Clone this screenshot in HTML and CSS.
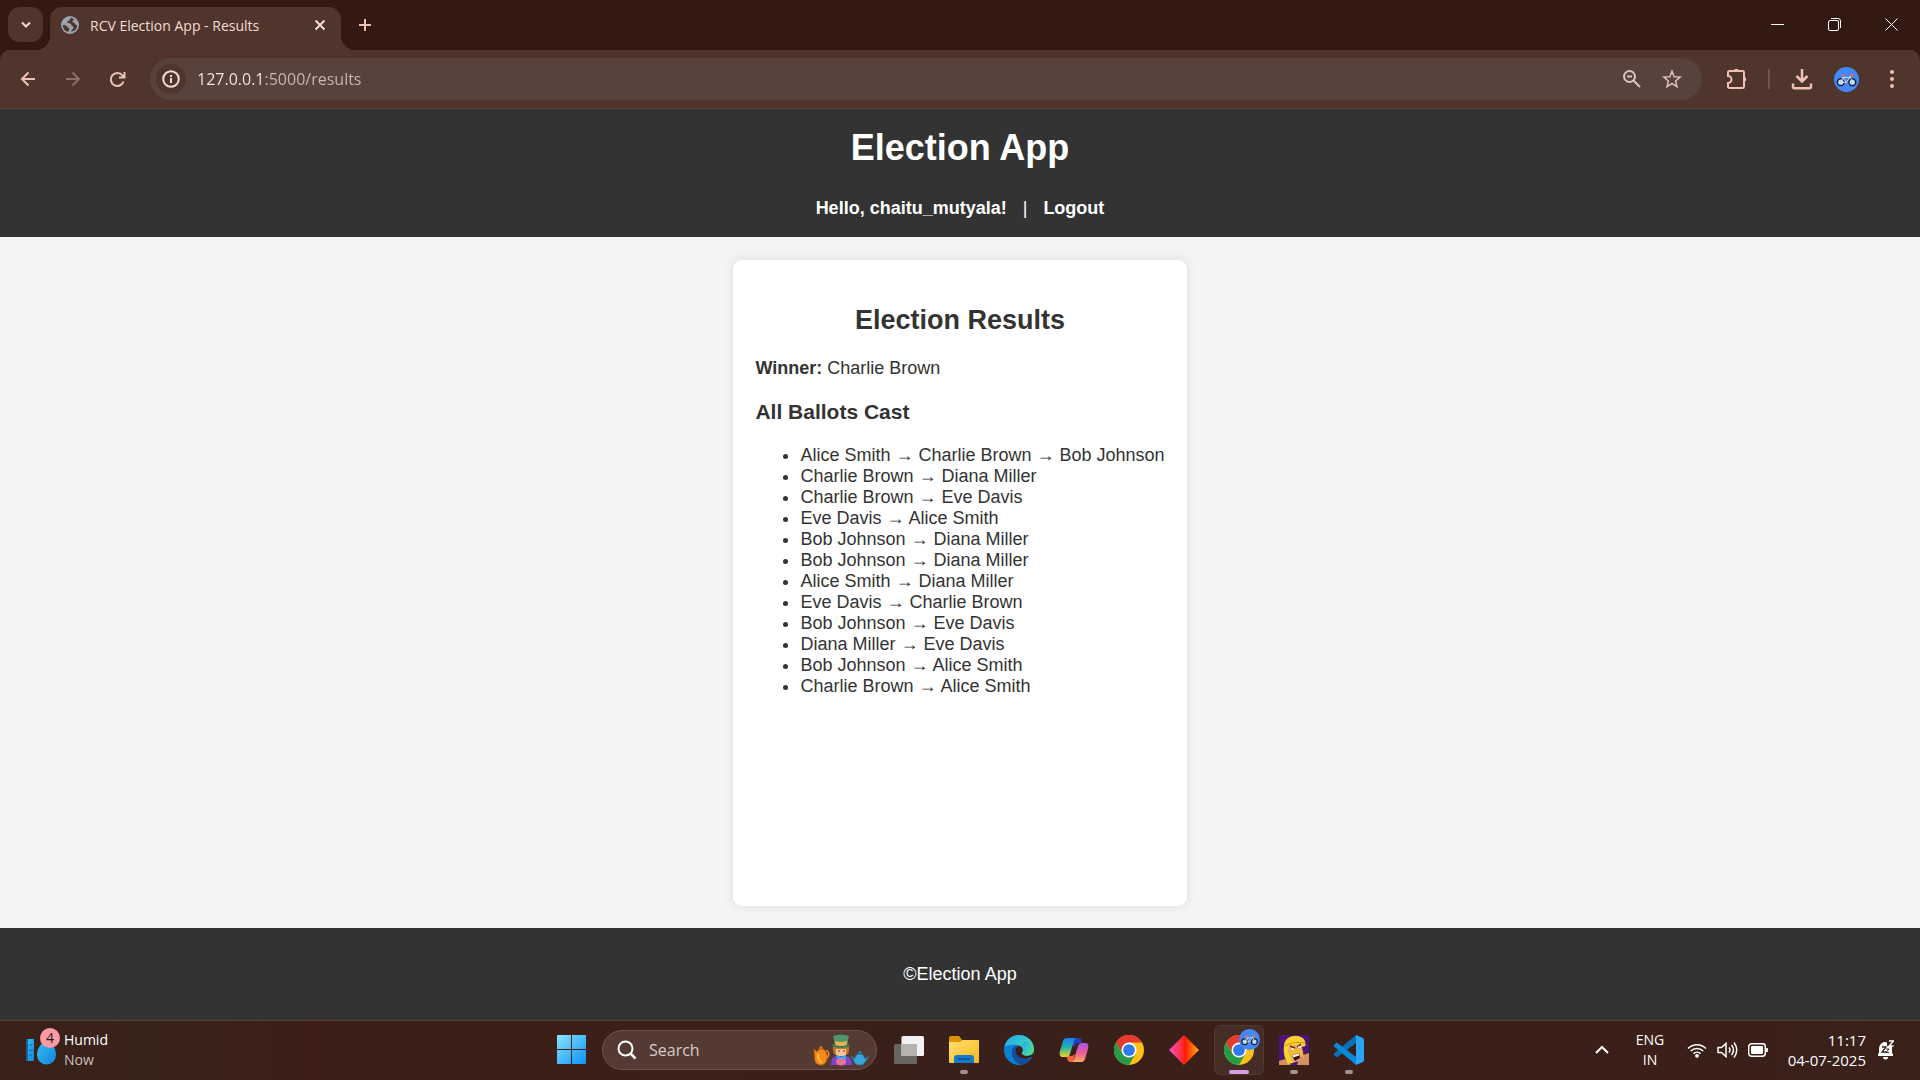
FILE: index.html
```html
<!DOCTYPE html>
<html lang="en">
<head>
<meta charset="utf-8">
<meta name="viewport" content="width=device-width, initial-scale=1">
<title>RCV Election App - Results</title>
<link rel="stylesheet" href="styles.css">
</head>
<body>
<svg width="0" height="0" class="defs" aria-hidden="true">
  <defs>
    <linearGradient id="win" x1="0" y1="0" x2="1" y2="1"><stop offset="0" stop-color="#8be3ff"/><stop offset="1" stop-color="#0a93f7"/></linearGradient>
    <linearGradient id="drop" x1="0" y1="0" x2="1" y2="1"><stop offset="0" stop-color="#35c3f5"/><stop offset="1" stop-color="#1683da"/></linearGradient>
    <linearGradient id="fold" x1="0" y1="0" x2="1" y2="1"><stop offset="0" stop-color="#ffdf74"/><stop offset="1" stop-color="#f9b91c"/></linearGradient>
    <linearGradient id="edgeTop" x1="0" y1="0" x2="1" y2="1"><stop offset="0" stop-color="#22a5e4"/><stop offset=".5" stop-color="#37c6cf"/><stop offset="1" stop-color="#66e94e"/></linearGradient>
    <linearGradient id="copA" x1="0" y1="0" x2="0" y2="1"><stop offset="0" stop-color="#1b7ef0"/><stop offset=".5" stop-color="#25b6a8"/><stop offset="1" stop-color="#f2d325"/></linearGradient>
    <linearGradient id="copB" x1="0" y1="0" x2="0" y2="1"><stop offset="0" stop-color="#a556e8"/><stop offset=".5" stop-color="#ec5a9c"/><stop offset="1" stop-color="#fcae5c"/></linearGradient>
    <linearGradient id="gem" x1="0" y1="0" x2="1" y2="0"><stop offset="0" stop-color="#ff4fd0"/><stop offset=".46" stop-color="#fb2a2d"/><stop offset=".54" stop-color="#ff1a00"/><stop offset="1" stop-color="#ffae10"/></linearGradient>
    <symbol id="bike" viewBox="0 0 25 25">
      <circle cx="12.5" cy="12.5" r="12.5" fill="#4488f7"/>
      <g fill="#b9dcff" stroke="#1c2434" stroke-width="1.5"><circle cx="6.8" cy="15.2" r="3.4"/><circle cx="18.3" cy="15.2" r="3.4"/></g>
      <path d="M6.8 15.2L9 10.5h7l-4 5zM9 10.5l3 5M16 9l2.3 6.2" fill="none" stroke="#cdd6e4" stroke-width="1"/>
      <path d="M7 8.4h4M15.5 8h3.2l-1 1.6" fill="none" stroke="#ee6a4c" stroke-width="1.5"/>
    </symbol>
    <symbol id="chrome" viewBox="0 0 48 48">
      <circle cx="24" cy="24" r="24" fill="#fbc116"/>
      <path d="M24 12h20.8A24 24 0 0 0 3.2 12l10.4 18z" fill="#e33b2e"/>
      <path d="M3.2 12A24 24 0 0 0 24 48L34.4 30 24 34 13.6 30z" fill="#269a46"/>
      <circle cx="24" cy="24" r="12" fill="#fff"/><circle cx="24" cy="24" r="9.4" fill="#2f7bee"/>
    </symbol>
  </defs>
</svg>
<div class="desktop">
  <div class="browser">
    <div class="tabstrip">
      <button class="tab-search" aria-label="Search tabs"><svg width="12" height="8" viewBox="0 0 12 8"><path d="M2 1.5L6 5.5l4-4" class="line-2"/></svg></button>
      <div class="tab">
        <svg width="18" height="18" viewBox="0 0 18 18"><circle cx="9" cy="9" r="9" fill="#9aa4ad"/><path d="M10.5 1.8C8 3 9.5 4.5 7 5c-1 .3-1 2 .5 2.200 2-.2 2.800.8 3 2 .5 1.200 2 .8 2 2.300 0 1.800-2 2-2.500 4.300A7.200 7.200 0 0 0 16.200 9c-1.200 0-2-.5-2.300-1.500-.4-1.200-2.400-.6-2.400-2 0-1.300 1-1.500 1.500-2.500zM1.800 9c1.500.2 3.700-.3 4.200 1.500.3 1.500 2.500.8 2.300 2.500-.2 1.200-.8 1.500-1.300 3A7.200 7.200 0 0 1 1.800 9z" fill="#50352c"/></svg>
        <span class="tab-title">RCV Election App - Results</span>
        <button class="plain" aria-label="Close tab"><svg width="12" height="12" viewBox="0 0 12 12"><path d="M1.500 1.500l9 9m0-9l-9 9" class="line-2"/></svg></button>
      </div>
      <button class="plain new-tab" aria-label="New tab"><svg width="14" height="14" viewBox="0 0 14 14"><path d="M7 1v12M1 7h12" class="line-2"/></svg></button>
      <div class="window-controls">
        <button class="plain" aria-label="Minimize"><svg width="13" height="13" viewBox="0 0 13 13"><path d="M0 6.500h13" class="line-w"/></svg></button>
        <button class="plain" aria-label="Restore"><svg width="13" height="13" viewBox="0 0 13 13"><rect x=".5" y="2.500" width="10" height="10" rx="1.500" class="line-w"/><path d="M3 .5h7a2.500 2.500 0 0 1 2.500 2.500v7" class="line-w"/></svg></button>
        <button class="plain" aria-label="Close"><svg width="13" height="13" viewBox="0 0 13 13"><path d="M.5.5l12 12m0-12l-12 12" class="line-w"/></svg></button>
      </div>
    </div>
    <div class="toolbar">
      <button class="plain tool" aria-label="Back"><svg width="16" height="16" viewBox="0 0 16 16"><path d="M15 8H2m6.500-6.500L2 8l6.500 6.500" class="line-2"/></svg></button>
      <button class="plain tool dim" aria-label="Forward"><svg width="16" height="16" viewBox="0 0 16 16"><path d="M1 8h13M7.500 1.500L14 8l-6.500 6.500" class="line-2"/></svg></button>
      <button class="plain tool" aria-label="Reload"><svg width="17" height="17" viewBox="0 0 17 17"><path d="M14.500 10.500A6.500 6.500 0 1 1 13.500 4.500L15 6M15.500 1v5.500H10" class="line-2"/></svg></button>
      <div class="omnibox">
        <button class="plain site-info" aria-label="View site information"><svg width="18" height="18" viewBox="0 0 18 18"><circle cx="9" cy="9" r="7.800" class="line-2"/><path d="M9 8v5M9 5v2" class="line-2"/></svg></button>
        <input class="url" type="text" aria-label="Address" value="127.0.0.1:5000/results">
        <button class="plain" aria-label="Zoom"><svg width="18" height="18" viewBox="0 0 18 18"><circle cx="6.500" cy="6.500" r="5.500" class="line-2"/><path d="M10.500 10.500l6.500 6.500M4 6.500h5" class="line-2"/></svg></button>
        <button class="plain" aria-label="Bookmark"><svg width="20" height="20" viewBox="0 0 20 20"><path d="M10 2.200l2.200 5.500 5.900.4-4.500 3.800 1.400 5.700-5-3.100-5 3.100 1.400-5.700L1.900 8.100l5.900-.4z" class="line-s"/></svg></button>
      </div>
      <button class="plain tool" aria-label="Extensions"><svg width="22" height="22" viewBox="0 0 22 22"><path d="M3.500 3h13.200a1.300 1.300 0 0 1 1.300 1.300v14.400a1.300 1.300 0 0 1-1.300 1.300H3.300A1.300 1.300 0 0 1 2 18.700V15a3.500 3.500 0 0 0 0-7V4.300A1.300 1.300 0 0 1 3.500 3z" class="line-2"/><path d="M7.500 3a2.800 2.800 0 0 1 5.500 0zM18 8.500a2.800 2.800 0 0 1 0 5.500z" fill="currentColor"/></svg></button>
      <span class="divider"></span>
      <button class="plain tool" aria-label="Downloads"><svg width="22" height="22" viewBox="0 0 22 22"><path d="M11 1v12M5.500 8l5.500 5.500L16.500 8M2 15.500V19a1.200 1.200 0 0 0 1.200 1.200h15.600A1.200 1.200 0 0 0 20 19v-3.500" class="line-b"/></svg></button>
      <button class="plain tool" aria-label="Profile"><svg width="25" height="25"><use href="#bike"/></svg></button>
      <button class="plain tool" aria-label="Menu"><svg width="4" height="18" viewBox="0 0 4 18" fill="currentColor"><circle cx="2" cy="2" r="2"/><circle cx="2" cy="9" r="2"/><circle cx="2" cy="16" r="2"/></svg></button>
    </div>
  </div>

  <div class="page">
    <header class="site-header">
      <h1>Election App</h1>
      <nav><strong>Hello, chaitu_mutyala!</strong><span>|</span><a href="#logout">Logout</a></nav>
    </header>
    <main>
      <section class="card">
        <h2>Election Results</h2>
        <p><strong>Winner:</strong> Charlie Brown</p>
        <h3>All Ballots Cast</h3>
        <ul>
          <li>Alice Smith <span class="arrow">→</span> Charlie Brown <span class="arrow">→</span> Bob Johnson</li>
          <li>Charlie Brown <span class="arrow">→</span> Diana Miller</li>
          <li>Charlie Brown <span class="arrow">→</span> Eve Davis</li>
          <li>Eve Davis <span class="arrow">→</span> Alice Smith</li>
          <li>Bob Johnson <span class="arrow">→</span> Diana Miller</li>
          <li>Bob Johnson <span class="arrow">→</span> Diana Miller</li>
          <li>Alice Smith <span class="arrow">→</span> Diana Miller</li>
          <li>Eve Davis <span class="arrow">→</span> Charlie Brown</li>
          <li>Bob Johnson <span class="arrow">→</span> Eve Davis</li>
          <li>Diana Miller <span class="arrow">→</span> Eve Davis</li>
          <li>Bob Johnson <span class="arrow">→</span> Alice Smith</li>
          <li>Charlie Brown <span class="arrow">→</span> Alice Smith</li>
        </ul>
      </section>
    </main>
    <footer class="site-footer"><p>©Election App</p></footer>
  </div>

  <div class="taskbar">
    <button class="plain weather">
      <span class="weather-icon">
        <svg width="32" height="34" viewBox="0 0 32 34"><rect x="1" y="6" width="7" height="22" fill="url(#drop)"/><path d="M0 6h2v22H0z" fill="#14609f"/><path d="M3 12h3M3 17h4M3 22h3" stroke="#14609f"/><path d="M21 4c5 6 9 11 9 18a9.500 9.500 0 0 1-19 0c0-7 5-12 10-18z" fill="url(#drop)"/></svg>
        <span class="badge">4</span>
      </span>
      <span class="stack"><span>Humid</span><span class="muted">Now</span></span>
    </button>
    <div class="dock">
      <button class="plain app" aria-label="Start"><svg width="29" height="29" viewBox="0 0 29 29" fill="url(#win)"><path d="M1 0h13v14H0V1a1 1 0 0 1 1-1zM15 0h13a1 1 0 0 1 1 1v13H15zM0 15h14v14H1a1 1 0 0 1-1-1zM15 15h14v13a1 1 0 0 1-1 1H15z"/></svg></button>
      <label class="search">
        <svg width="20" height="20" viewBox="0 0 20 20"><circle cx="8.500" cy="8.500" r="7" class="line-2"/><path d="M13.500 13.500l5 5" class="line-b"/></svg>
        <input type="text" placeholder="Search" aria-label="Search">
        <svg width="56" height="32" viewBox="0 0 56 32">
          <path d="M1 15l3 3c1-2 2-3 4-3 4 0 6 3 6 8 0 4-2 8-6 8s-7-3-6-8zM7 13l1-1 2 3H6z" fill="#f78a16" stroke="#c9650c" stroke-width=".8"/><path d="M13 17c3-1 4 4 1 7" fill="none" stroke="#f78a16" stroke-width="1.500"/><path d="M5 20c0 5 1 7 4 9" stroke="#ffc04a" stroke-width="2" fill="none"/>
          <circle cx="28" cy="16" r="7" fill="#f6c394"/><path d="M20 12c0 7 1 9 3 8l1-5h8l1 5c3 1 3-3 3-8z" fill="#c8752b"/><path d="M23 15h10v4q-5 5-10 0z" fill="#f6c394"/>
          <ellipse cx="28" cy="11.500" rx="9" ry="2.500" fill="#3e7a54"/><path d="M20 2q8-3 16 0l-2 9q-6 2-12 0z" fill="#53946a"/><path d="M22 7q6 2 12 0l-.5 4q-5 2-11 0z" fill="#e9b647"/>
          <path d="M18 31c0-7 3-9 6-9h8c4 0 7 3 7 9z" fill="#8244c8"/><path d="M24 21l4 2 5-2v5l-5-1-4 1z" fill="#28aee5"/><ellipse cx="28" cy="28" rx="5" ry="3.500" fill="#f56e94"/><path d="M25 17h2m3 0h2" stroke="#5a3220"/>
          <path d="M38 22l4 3c0-4 2-5 5-5s4 2 5 5l4-3-4 6c-1 2-2 3-5 3-4 0-6-2-6-4zM45 19l2-2 2 2z" fill="#36a6d8" stroke="#1978a7" stroke-width=".6"/>
        </svg>
      </label>
      <button class="plain app" aria-label="Task view"><svg width="30" height="28" viewBox="0 0 30 28"><rect y="8" width="23" height="20" rx="1.500" fill="#686563"/><rect x="7.500" width="22.500" height="20" rx="1.500" fill="#f2f2f2"/><path d="M7.500 8H23v12H7.500z" fill="#b5b3b2"/></svg></button>
      <button class="plain app running" aria-label="File Explorer"><svg width="30" height="28" viewBox="0 0 30 28"><path d="M0 2a2 2 0 0 1 2-2h8l3 4h14a3 3 0 0 1 3 3v6H0z" fill="#dc9404"/><path d="M0 6h11l3-2h16v22a1 1 0 0 1-1 1H1a1 1 0 0 1-1-1z" fill="url(#fold)"/><path d="M5 27v-5a3 3 0 0 1 3-3h14a3 3 0 0 1 3 3v5z" fill="#1479c9"/><path d="M9 23h12" stroke="#0b4f91" stroke-width="1.500"/></svg></button>
      <button class="plain app" aria-label="Edge"><svg width="30" height="30" viewBox="0 0 30 30"><circle cx="15" cy="15" r="15" fill="#0d7ed6"/><path d="M.3 12A15 15 0 0 1 30 14c0 4-3 6.500-7 6.500-3 0-5-1-5-2.500 0-1 1-1.500 1-3 0-3-4-5.500-8.500-5.500C6 9.500 2 10.500.3 12z" fill="url(#edgeTop)"/><path d="M12 11c-3 1-5 5-4 9 1 5 5 9 10 9.700 4-.5 7.500-3.500 9.500-7.200-3 2-8 2-11 0-4-2.500-5.500-7.500-2-11z" fill="#124f9a"/><path d="M14 11c-4 3-3 9 2 11.500 4 2 8 1.500 11.500-.5.600-.3 1.200 0 1 .5l1.500.5V18l-2 1.500c-4 2.500-10 1.500-10-1.500 0-1 1-1.500 1-3 0-2-2-4.500-5-4z" fill="#3b1e17"/><path d="M28.500 18c-1.500 2-4 2.500-6 2.500-2.500 0-4.500-1-4.500-2.500 0-1 1-1.500 1-3 0-2-1-3-2-4l4-5 9 7c0 2-.5 3.500-1.500 5z" fill="url(#edgeTop)"/></svg></button>
      <button class="plain app" aria-label="Copilot"><svg width="30" height="26" viewBox="0 0 30 26"><path d="M12 1h8c2 0 2.500 2 3 5h-4c-2 0-3 2-4 5z" fill="#2441bd"/><path d="M8 19h5l3-2-2 8h-2c-3 0-4-2-4-6z" fill="#f2603c"/><path d="M8 1h10c-2 0-3 2-4 6l-3 10c-.5 2-2 3-4 3H4c-3 0-4-2-3-6L4 4c.7-2 2-3 4-3z" fill="url(#copA)"/><path d="M22 25H12c2 0 3-2 4-6l3-10c.5-2 2-3 4-3h3c3 0 4 2 3 6l-3 10c-.7 2-2 3-4 3z" fill="url(#copB)"/></svg></button>
      <button class="plain app" aria-label="Chrome"><svg width="30" height="30"><use href="#chrome"/></svg></button>
      <button class="plain app" aria-label="Gem"><svg width="30" height="30" viewBox="0 0 30 30"><path d="M15 0l15 15-15 15L0 15z" fill="url(#gem)"/></svg></button>
      <button class="plain app active" aria-label="Chrome profile"><svg width="30" height="30"><use href="#chrome"/></svg><svg class="profile-badge" width="21" height="21"><use href="#bike"/></svg></button>
      <button class="plain app running" aria-label="Game"><svg width="30" height="30" viewBox="0 0 30 30"><path d="M0 0h30v30H0z" fill="#4a1577"/><path d="M21 21l9-3v12H18zM0 26l6-2 6 6H0z" fill="#d5905f"/><path d="M8 9l14-1 2 9-4 9-7 2-5-9z" fill="#e9a878"/><path d="M5 11C5 4 12 0 18 1c6 .5 9 4 8.500 10l-3.500 1-2-3-8 2-3 1-1 4 2 5 3 7-5 1c-3-5-5-11-4-18z" fill="#fbd12e"/><path d="M6 11q8-5 20-3" stroke="#d79312" fill="none"/><path d="M10 16q6-1 7-2 5 0 7 3l1 7-2-3-3-3-6 1-3 5z" fill="#f2bd1f"/><path d="M13 21l7-3 1 5-5 3z" fill="#3c1111"/><path d="M13.500 20.500l6.500-2v2l-6 2z" fill="#fff"/><path d="M11 11l5 2M18 12l4-3" stroke="#6e2d12" stroke-width="1.500"/><path d="M12 14h3m4-2h3" stroke="#fff" stroke-width="1.500"/></svg></button>
      <button class="plain app running" aria-label="Visual Studio Code"><svg width="30" height="30" viewBox="0 0 30 30"><path d="M22 0L0 18.500a1 1 0 0 0 0 1.500l2 2a1 1 0 0 0 1.500 0L22 8z" fill="#0a72b8"/><path d="M22 30L0 11.500A1 1 0 0 1 0 10l2-2a1 1 0 0 1 1.500 0L22 22z" fill="#0a89d5"/><path d="M22 0l7 3q1 .5 1 1.500v21q0 1-1 1.500l-7 3z" fill="#2aa5f2"/></svg></button>
    </div>
    <div class="tray">
      <button class="plain" aria-label="Show hidden icons"><svg width="14" height="9" viewBox="0 0 14 9"><path d="M1 8l6-6 6 6" class="line-2"/></svg></button>
      <button class="plain stack lang"><span>ENG</span><span>IN</span></button>
      <button class="plain quick" aria-label="Network, volume and battery">
        <svg width="20" height="16" viewBox="0 0 20 16"><path d="M1 6.500a12.700 12.700 0 0 1 18 0M3.800 9a8.800 8.800 0 0 1 12.400 0M6.500 11.600a5 5 0 0 1 7 0" class="line-s"/><circle cx="10" cy="13.800" r="1.900" fill="#fff"/></svg>
        <svg width="21" height="18" viewBox="0 0 21 18"><path d="M1 6.500h3.500L9 2.500v13l-4.500-4H1zM12 6.500q2 2.500 0 5M14.500 4q4 5 0 10M17 1.500q5.500 7.500 0 15" class="line-s"/></svg>
        <svg width="20" height="14" viewBox="0 0 20 14"><rect x=".7" y=".7" width="16.600" height="12.600" rx="3" class="line-s"/><rect x="3" y="3" width="12" height="8" rx="1" fill="#fff"/><path d="M18 5h1a1 1 0 0 1 1 1v2a1 1 0 0 1-1 1h-1z" fill="#fff"/></svg>
      </button>
      <button class="plain stack clock"><span>11:17</span><span>04-07-2025</span></button>
      <button class="plain" aria-label="Notifications"><svg width="17" height="20" viewBox="0 0 17 20"><path d="M1 16v-1.500l1-2V8a6 6 0 0 1 8-5.500V6h5v6.500l1 2V16zM6 17h5a2.500 2.500 0 0 1-5 0z" fill="#fff"/><path d="M5 7h4l-4 5h4" fill="none" stroke="#39201a" stroke-width="1.300"/><path d="M9 9h3l-3 3.500h3" fill="none" stroke="#39201a" stroke-width="1"/><path d="M12 1h4.500L12 6h4.500" fill="none" stroke="#fff" stroke-width="1.300"/></svg></button>
    </div>
  </div>
</div>
</body>
</html>
```
FILE: styles.css
```css
* { box-sizing: border-box; }

body {
  margin: 0;
  font-family: "Liberation Sans", Arial, sans-serif;
  font-size: 18px;
  line-height: 21px;
  color: #333;
}

svg { display: block; flex: none; }
.defs { position: absolute; }

.desktop {
  display: flex;
  flex-direction: column;
  min-height: 100vh;
}

.plain {
  display: flex;
  align-items: center;
  justify-content: center;
  padding: 0;
  border: 0;
  background: none;
  color: inherit;
  font: inherit;
}

.line-w, .line-s, .line-2, .line-b { fill: none; stroke: currentColor; }
.line-w { stroke-width: 1; }
.line-s { stroke-width: 1.5; }
.line-2 { stroke-width: 2; }
.line-b { stroke-width: 2.5; }

/* Browser window */
.browser {
  background: #331912;
  color: #f3dcd5;
  font-family: "Open Sans", "Noto Sans", sans-serif;
}

.tabstrip {
  display: flex;
  height: 50px;
  padding: 7px 0 0 8px;
}

.tab-search {
  display: flex;
  align-items: center;
  justify-content: center;
  width: 35px;
  height: 35px;
  margin-right: 7px;
  padding: 0;
  border: 0;
  border-radius: 12px;
  background: #50352c;
  color: inherit;
}

.tab {
  position: relative;
  display: flex;
  align-items: center;
  gap: 11px;
  width: 291px;
  padding: 0 15px 7px 11px;
  border-radius: 12px 12px 0 0;
  background: #50352c;
  font-size: 14px;
}

.tab::before, .tab::after {
  content: "";
  position: absolute;
  bottom: 0;
  width: 14px;
  height: 14px;
}
.tab::before { right: 100%; background: radial-gradient(circle at 0 0, transparent 14px, #50352c 14px); }
.tab::after { left: 100%; background: radial-gradient(circle at 100% 0, transparent 14px, #50352c 14px); }

.tab-title { flex: 1; white-space: nowrap; }

.new-tab { width: 48px; height: 36px; color: #efc0b4; }

.window-controls {
  display: flex;
  height: 34px;
  margin-left: auto;
  color: #fff;
}
.window-controls .plain { width: 57px; }

.toolbar {
  display: flex;
  align-items: center;
  height: 59px;
  padding: 0 6px 0 5px;
  border-bottom: 1px solid #5d473f;
  border-radius: 10px 10px 0 0;
  background: #50352c;
  color: #efc0b4;
}

.tool { width: 45px; height: 40px; }
.dim { color: #8f6e65; }

.omnibox {
  display: flex;
  flex: 1;
  align-items: center;
  height: 42px;
  margin: 0 12px 0 10px;
  padding: 0 20px 0 6px;
  gap: 21px;
  border-radius: 21px;
  background: #58423c;
  color: #dcc3bb;
}

.site-info {
  width: 30px;
  height: 30px;
  margin-right: -10px;
  border-radius: 50%;
  background: #50352c;
  color: #f3dcd5;
}

.url {
  flex: 1;
  min-width: 0;
  padding: 0;
  border: 0;
  background: linear-gradient(to right, #fbe9e3 68px, #d0b8b0 68px) text;
  color: transparent;
  font: 16px/24px "Open Sans", "Noto Sans", sans-serif;
}

.divider { width: 2px; height: 20px; margin: 0 9px; background: #76534a; }

/* Web page */
.page {
  display: flex;
  flex: 1;
  flex-direction: column;
  background: #f4f4f4;
}

.site-header {
  padding: 18px;
  background: #333;
  color: #fff;
  text-align: center;
}
.site-header h1 { margin: 0 0 30px; font-size: 36px; line-height: 41px; }
.site-header nav { display: flex; justify-content: center; gap: 16px; }
.site-header a { color: #fff; font-weight: bold; text-decoration: none; }

main {
  display: flex;
  flex: 1;
  justify-content: center;
  padding: 23px 22px 22px;
}

.card {
  max-width: 900px;
  padding: 23px 22px;
  border-radius: 9px;
  background: #fff;
  box-shadow: 0 0 11px rgba(0, 0, 0, 0.1);
}
.card h2 { margin: 22px 0; font-size: 27px; line-height: 31px; text-align: center; }
.card p { margin: 0; }
.card h3 { margin: 21px 0; font-size: 21px; line-height: 24px; }
.card ul { margin: 0; padding-left: 45px; }
.arrow { font-family: "Liberation Serif", "Times New Roman", serif; line-height: 1; }

.site-footer {
  padding: 18px 17px 17px;
  background: #333;
  color: #fff;
  text-align: center;
}
.site-footer p { margin: 18px 0; }

/* Taskbar */
.taskbar {
  display: grid;
  grid-template-columns: 1fr auto 1fr;
  align-items: center;
  height: 60px;
  padding: 0 26px 2px;
  border-top: 1px solid #574038;
  background: linear-gradient(to right, #3a211a, #38231a 8%, #3d1e18 16%, #3a201a 50%, #3b1f18 85%, #39211a);
  color: #fff;
  font: 14px/20px "Open Sans", "Noto Sans", sans-serif;
}

.weather { justify-self: start; gap: 6px; }
.weather-icon { position: relative; }
.badge {
  position: absolute;
  top: -5px;
  right: -2px;
  width: 20px;
  height: 20px;
  border-radius: 50%;
  background: #ff99a4;
  color: #1b1b1b;
}

.stack { display: flex; flex-direction: column; align-items: flex-start; justify-content: center; }
.muted { color: #c9bfbc; }

.dock { display: flex; align-items: center; }

.app { position: relative; width: 55px; height: 50px; }

.search {
  display: flex;
  align-items: center;
  gap: 12px;
  width: 275px;
  height: 40px;
  margin: 0 4px 0 3px;
  padding: 0 7px 0 14px;
  border: 1px solid #6d544e;
  border-radius: 20px;
  background: #553a34;
}
.search input {
  flex: 1;
  min-width: 0;
  padding: 0;
  border: 0;
  background: none;
  color: #fff;
  font: 16px/24px "Open Sans", "Noto Sans", sans-serif;
}
.search input::placeholder { color: #d5cbc8; }

.running::after, .active::after {
  content: "";
  position: absolute;
  bottom: 1px;
  width: 8px;
  height: 4px;
  border-radius: 2px;
  background: #a1938f;
}
.active::after { width: 20px; background: #d79ce4; }
.active::before {
  content: "";
  position: absolute;
  inset: 0 2px 0 3px;
  border: 1px solid #513a34;
  border-radius: 6px;
  background: rgba(255, 255, 255, 0.06);
}
.active svg { position: relative; }
.active .profile-badge { position: absolute; top: 4px; left: 28px; }

.tray { display: flex; align-items: center; justify-self: end; }
.lang { width: 40px; align-items: center; margin: 0 17px 0 21px; }
.quick { gap: 10px; }
.clock { width: 98px; align-items: flex-end; margin-right: 11px; font-size: 15px; }
```
